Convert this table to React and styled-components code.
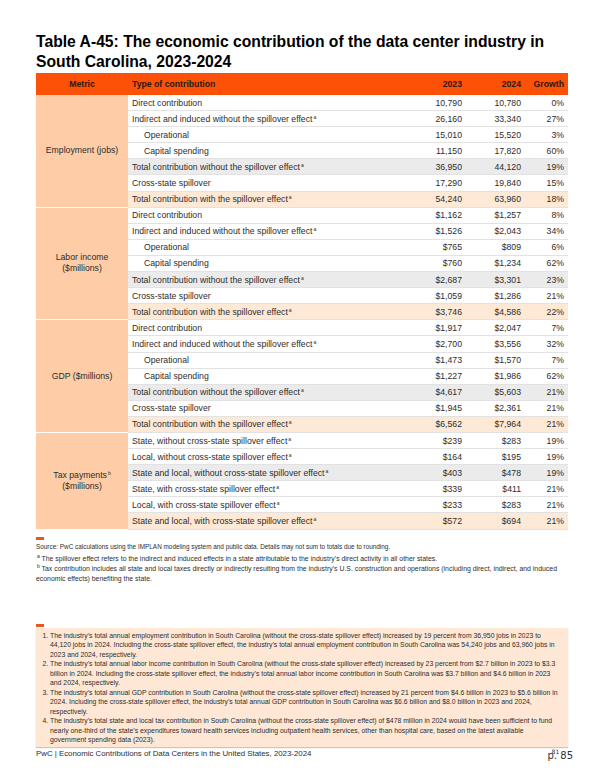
import React from "react";
import styled, { createGlobalStyle } from "styled-components";

const GlobalStyle = createGlobalStyle`
  html, body {
    margin: 0;
    padding: 0;
    background: #ffffff;
  }
  body {
    font-family: "Liberation Sans", Arial, sans-serif;
    color: #2d2d2d;
  }
`;

const Page = styled.div`
  width: 600px;
  height: 776px;
  box-sizing: border-box;
  padding: 32px 32px 0 36px;
  display: flex;
  flex-direction: column;
  overflow: hidden;
`;

const Title = styled.h1`
  margin: 0;
  font-size: 15.7px;
  line-height: 20px;
  font-weight: 700;
  color: #000000;
`;

const Table = styled.table`
  margin-top: 1px;
  width: 532px;
  border-collapse: collapse;
  table-layout: fixed;
  font-size: 8.7px;
`;

const HeadCell = styled.th`
  height: 22px;
  padding: 0 4px;
  background: #fd5108;
  color: #2a1a12;
  font-weight: 700;
  text-align: ${(p) => p.$align || "left"};
  vertical-align: middle;
`;

const tones = {
  plain: "#ffffff",
  gray: "#ebebeb",
  peach: "#fee9d6",
};

const Cell = styled.td`
  height: 15.1px;
  padding: 0 4px 0 ${(p) => (p.$indent ? "16px" : "4px")};
  background: ${(p) => tones[p.$tone || "plain"]};
  border-bottom: 1px solid #e2e2e2;
  text-align: ${(p) => p.$align || "left"};
  white-space: nowrap;
  vertical-align: middle;
`;

const MetricCell = styled.td`
  padding: 0 4px;
  background: #fecca6;
  border-bottom: 1px solid #ffffff;
  text-align: center;
  vertical-align: middle;
  line-height: 11px;
`;

const Sup = styled.sup`
  font-size: 5px;
  line-height: 0;
  vertical-align: 3px;
  margin-left: 1px;
`;

const Rule = styled.div`
  flex: none;
  width: 8px;
  height: 3px;
  background: #e8571f;
  margin-top: ${(p) => p.$top || 0}px;
`;

const Source = styled.p`
  margin: 2px 0 0;
  font-size: 6.4px;
  line-height: 9px;
`;

const Notes = styled.div`
  margin-top: 3px;
  font-size: 6.9px;
  line-height: 10px;
  p {
    margin: 0;
  }
`;

const Box = styled.div`
  margin-top: 1px;
  background: #fee7d4;
  padding: 3px 10px 2px 0;
  box-shadow: 0 1px 1px rgba(120, 90, 60, 0.35);
`;

const List = styled.ol`
  margin: 0;
  padding-left: 14px;
  font-size: 6.85px;
  line-height: 9.5px;
`;

const Footer = styled.div`
  margin-top: 1px;
  display: flex;
  justify-content: space-between;
  align-items: flex-start;
`;

const FooterText = styled.span`
  font-size: 7.85px;
  line-height: 11px;
`;

const PageNo = styled.span`
  position: relative;
  margin-right: -5px;
  margin-top: 2px;
  font-family: "DejaVu Sans", sans-serif;
  font-size: 10px;
  line-height: 12px;
  color: #333333;
`;

const PageSup = styled.span`
  position: absolute;
  left: 4px;
  top: -4px;
  font-size: 6px;
`;

const groups = [
  {
    metric: ["Employment (jobs)"],
    rows: [
      ["Direct contribution", null, "10,790", "10,780", "0%"],
      ["Indirect and induced without the spillover effect", "a", "26,160", "33,340", "27%"],
      ["Operational", null, "15,010", "15,520", "3%", "plain", true],
      ["Capital spending", null, "11,150", "17,820", "60%", "plain", true],
      ["Total contribution without the spillover effect", "a", "36,950", "44,120", "19%", "gray"],
      ["Cross-state spillover", null, "17,290", "19,840", "15%"],
      ["Total contribution with the spillover effect", "a", "54,240", "63,960", "18%", "peach"],
    ],
  },
  {
    metric: ["Labor income", "($millions)"],
    rows: [
      ["Direct contribution", null, "$1,162", "$1,257", "8%"],
      ["Indirect and induced without the spillover effect", "a", "$1,526", "$2,043", "34%"],
      ["Operational", null, "$765", "$809", "6%", "plain", true],
      ["Capital spending", null, "$760", "$1,234", "62%", "plain", true],
      ["Total contribution without the spillover effect", "a", "$2,687", "$3,301", "23%", "gray"],
      ["Cross-state spillover", null, "$1,059", "$1,286", "21%"],
      ["Total contribution with the spillover effect", "a", "$3,746", "$4,586", "22%", "peach"],
    ],
  },
  {
    metric: ["GDP ($millions)"],
    rows: [
      ["Direct contribution", null, "$1,917", "$2,047", "7%"],
      ["Indirect and induced without the spillover effect", "a", "$2,700", "$3,556", "32%"],
      ["Operational", null, "$1,473", "$1,570", "7%", "plain", true],
      ["Capital spending", null, "$1,227", "$1,986", "62%", "plain", true],
      ["Total contribution without the spillover effect", "a", "$4,617", "$5,603", "21%", "gray"],
      ["Cross-state spillover", null, "$1,945", "$2,361", "21%"],
      ["Total contribution with the spillover effect", "a", "$6,562", "$7,964", "21%", "peach"],
    ],
  },
  {
    metric: ["Tax payments", "($millions)"],
    metricSup: "b",
    rows: [
      ["State, without cross-state spillover effect", "a", "$239", "$283", "19%"],
      ["Local, without cross-state spillover effect", "a", "$164", "$195", "19%"],
      ["State and local, without cross-state spillover effect", "a", "$403", "$478", "19%", "gray"],
      ["State, with cross-state spillover effect", "a", "$339", "$411", "21%"],
      ["Local, with cross-state spillover effect", "a", "$233", "$283", "21%"],
      ["State and local, with cross-state spillover effect", "a", "$572", "$694", "21%", "peach"],
    ],
  },
];

const findings = [
  "The industry’s total annual employment contribution in South Carolina (without the cross-state spillover effect) increased by 19 percent from 36,950 jobs in 2023 to 44,120 jobs in 2024. Including the cross-state spillover effect, the industry’s total annual employment contribution in South Carolina was 54,240 jobs and 63,960 jobs in 2023 and 2024, respectively.",
  "The industry’s total annual labor income contribution in South Carolina (without the cross-state spillover effect) increased by 23 percent from $2.7 billion in 2023 to $3.3 billion in 2024. Including the cross-state spillover effect, the industry’s total annual labor income contribution in South Carolina was $3.7 billion and $4.6 billion in 2023 and 2024, respectively.",
  "The industry’s total annual GDP contribution in South Carolina (without the cross-state spillover effect) increased by 21 percent from $4.6 billion in 2023 to $5.6 billion in 2024. Including the cross-state spillover effect, the industry’s total annual GDP contribution in South Carolina was $6.6 billion and $8.0 billion in 2023 and 2024, respectively.",
  "The industry’s total state and local tax contribution in South Carolina (without the cross-state spillover effect) of $478 million in 2024 would have been sufficient to fund nearly one-third of the state’s expenditures toward health services including outpatient health services, other than hospital care, based on the latest available government spending data (2023).",
];

function MetricLabel({ group }) {
  return group.metric.map((line, i) => (
    <React.Fragment key={i}>
      {i > 0 && <br />}
      {line}
      {i === 0 && group.metricSup && <Sup>{group.metricSup}</Sup>}
    </React.Fragment>
  ));
}

export default function App() {
  return (
    <Page>
      <GlobalStyle />
      <Title>
        Table A-45: The economic contribution of the data center industry in
        South Carolina, 2023-2024
      </Title>
      <Table>
        <colgroup>
          <col style={{ width: 92 }} />
          <col style={{ width: 282 }} />
          <col style={{ width: 56 }} />
          <col style={{ width: 59 }} />
          <col style={{ width: 43 }} />
        </colgroup>
        <thead>
          <tr>
            <HeadCell $align="center">Metric</HeadCell>
            <HeadCell>Type of contribution</HeadCell>
            <HeadCell $align="right">2023</HeadCell>
            <HeadCell $align="right">2024</HeadCell>
            <HeadCell $align="right">Growth</HeadCell>
          </tr>
        </thead>
        <tbody>
          {groups.map((group) =>
            group.rows.map(([label, sup, y23, y24, growth, tone, indent], i) => (
              <tr key={group.metric[0] + i}>
                {i === 0 && (
                  <MetricCell rowSpan={group.rows.length}>
                    <MetricLabel group={group} />
                  </MetricCell>
                )}
                <Cell $tone={tone} $indent={indent}>
                  {label}
                  {sup && <Sup>{sup}</Sup>}
                </Cell>
                <Cell $tone={tone} $align="right">{y23}</Cell>
                <Cell $tone={tone} $align="right">{y24}</Cell>
                <Cell $tone={tone} $align="right">{growth}</Cell>
              </tr>
            ))
          )}
        </tbody>
      </Table>

      <Rule $top={7} />
      <Source>
        Source: PwC calculations using the IMPLAN modeling system and public
        data. Details may not sum to totals due to rounding.
      </Source>
      <Notes>
        <p>
          <Sup>a</Sup> The spillover effect refers to the indirect and induced
          effects in a state attributable to the industry’s direct activity in
          all other states.
        </p>
        <p>
          <Sup>b</Sup> Tax contribution includes all state and local taxes
          directly or indirectly resulting from the industry’s U.S. construction
          and operations (including direct, indirect, and induced economic
          effects) benefiting the state.
        </p>
      </Notes>

      <Rule $top={40} />
      <Box>
        <List>
          {findings.map((text, i) => (
            <li key={i}>{text}</li>
          ))}
        </List>
      </Box>

      <Footer>
        <FooterText>
          PwC | Economic Contributions of Data Centers in the United States,
          2023-2024
        </FooterText>
        <PageNo>
          p. 85
          <PageSup>81</PageSup>
        </PageNo>
      </Footer>
    </Page>
  );
}
